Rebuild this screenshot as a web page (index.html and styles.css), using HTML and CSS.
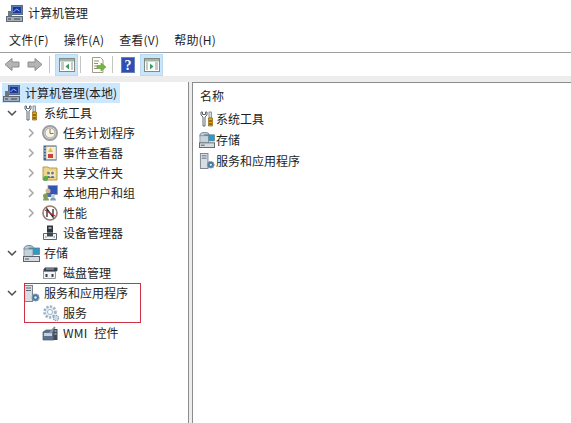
FILE: index.html
```html
<!DOCTYPE html>
<html lang="zh-CN">
<head>
<meta charset="utf-8">
<title>计算机管理</title>
<link rel="stylesheet" href="styles.css">
</head>
<body>
<svg class="defs" width="0" height="0" aria-hidden="true">
  <symbol id="i-computer" viewBox="0 0 17 17">
    <rect x="5.500" y="0.500" width="11" height="9" fill="#5c7fb8" stroke="#5a6a80"/>
    <rect x="7" y="2" width="8" height="6" fill="#1c35a0"/>
    <path d="M7.500 7l3-3 3 2" stroke="#9cc4ee" fill="none"/>
    <path d="M2 6h4v6H2z" fill="#6e7986"/>
    <rect x="0.500" y="11.500" width="16" height="5" fill="#a4acb5" stroke="#5f6a78"/>
    <path d="M2 14h3M8 14h6" stroke="#3d4650"/>
  </symbol>
  <symbol id="i-tools" viewBox="0 0 16 16">
    <path d="M2 1v3l2 2v9h2V6l2-2V1L6.500 1v2.500h-3V1z" fill="#fff" stroke="#5d6670" stroke-width="1"/>
    <rect x="10" y="1" width="2.500" height="6" fill="#d8dde2" stroke="#6a727a" stroke-width="0.700"/>
    <path d="M9.500 7h4v8h-4z" fill="#eaa612" stroke="#8a6208" stroke-width="0.700"/>
    <path d="M10 10h3M10 13h3" stroke="#34302a"/>
  </symbol>
  <symbol id="i-clock" viewBox="0 0 16 16">
    <circle cx="8" cy="8" r="7" fill="#f0ece2" stroke="#9a9ea4" stroke-width="2"/>
    <circle cx="8" cy="8" r="5" fill="#f8f4e6" stroke="#6f7379" stroke-width="0.600"/>
    <path d="M8 4v4.500h3.500" stroke="#96742a" fill="none" stroke-width="1"/>
  </symbol>
  <symbol id="i-log" viewBox="0 0 16 16">
    <rect x="1.500" y="0.500" width="13" height="15" fill="#3e5f8e"/>
    <rect x="4" y="1.500" width="10" height="13" fill="#f4efd8" stroke="#9a9a90" stroke-width="0.500"/>
    <path d="M8.500 2.500l2.500 4.500h-5z" fill="#eebc2c"/>
    <rect x="6" y="9" width="5" height="4" fill="#cf3f3a"/>
    <path d="M2 3h2M2 6h2M2 9h2M2 12h2" stroke="#c8d4e4"/>
  </symbol>
  <symbol id="i-share" viewBox="0 0 16 16">
    <path d="M1 2h5l1 1h8v12H1z" fill="#ecd68c" stroke="#b49b4e"/>
    <path d="M6 6h7v7H6z" fill="#f6eab8"/>
    <circle cx="6.500" cy="8" r="1.500" fill="#6d7c8c"/>
    <circle cx="10.500" cy="8" r="1.500" fill="#6d7c8c"/>
    <path d="M4.500 13a2 2 0 014 0zM8.500 13a2 2 0 014 0z" fill="#54708f"/>
    <circle cx="3.500" cy="13.500" r="2.500" fill="#4fae48"/>
  </symbol>
  <symbol id="i-users" viewBox="0 0 16 16">
    <rect x="6" y="0.500" width="9.500" height="9" fill="#3556b0" stroke="#8f9aa8" stroke-width="0.700"/>
    <circle cx="6" cy="6" r="2.500" fill="#d9b48c"/>
    <path d="M2 12c0-3 2-4 4-4s4 1 4 4z" fill="#4a73ad"/>
    <circle cx="3.500" cy="11" r="2.500" fill="#7aa05c"/>
    <path d="M1 15.500c0-2 1-3 3-3s3 1 3 3z" fill="#8b9a5d"/>
    <circle cx="11" cy="11" r="2" fill="#c4cfdb"/>
    <path d="M8 15.500c0-2 1.500-3 3-3s3 1 3 3z" fill="#7f9cbc"/>
  </symbol>
  <symbol id="i-perf" viewBox="0 0 16 16">
    <circle cx="8" cy="8" r="7" fill="#fff" stroke="#9b7a70" stroke-width="1.600"/>
    <path d="M5 12V4l6 8V4" fill="none" stroke="#1e2735" stroke-width="1.300"/>
    <path d="M3 5l10 6" stroke="#c9312c" stroke-width="1.200"/>
  </symbol>
  <symbol id="i-device" viewBox="0 0 16 16">
    <rect x="5" y="0.500" width="6" height="7" fill="#2f353d"/>
    <rect x="6.500" y="2" width="3" height="2" fill="#9aa3ad"/>
    <path d="M1.500 8.500h13v6h-13z" fill="#f4f5f6" stroke="#5d6670"/>
    <path d="M5 7.500h6v4H5z" fill="#3f4750"/>
    <path d="M3 12h1.500M11.500 12H13" stroke="#6a727a"/>
  </symbol>
  <symbol id="i-storage" viewBox="0 0 17 17">
    <ellipse cx="6" cy="3.500" rx="5" ry="3" fill="#bcd0de" stroke="#6f8090"/>
    <rect x="6" y="3" width="10.500" height="6.500" fill="#2f9ac8" stroke="#5d7686" stroke-width="0.700"/>
    <rect x="1" y="4" width="9" height="8" fill="#c6d2da" stroke="#6f8090" stroke-width="0.700"/>
    <rect x="0.500" y="11.500" width="16" height="5" fill="#d6dbe0" stroke="#5d6670"/>
    <path d="M2 14h4" stroke="#4c545d"/>
  </symbol>
  <symbol id="i-disk" viewBox="0 0 16 16">
    <path d="M3 2.500h12.500v3l-1 1H1.500v-2z" fill="#39414a"/>
    <path d="M4 4h8" stroke="#aab2ba"/>
    <rect x="1.500" y="6.500" width="12" height="7" fill="#f2f3f4" stroke="#6a727a" stroke-width="0.700"/>
    <path d="M3.500 9h2v3h-2zM9.500 9h2v3h-2z" fill="#3a424b"/>
  </symbol>
  <symbol id="i-server" viewBox="0 0 17 17">
    <rect x="1.500" y="0.500" width="8" height="16" fill="#d8dde2" stroke="#7a8490"/>
    <path d="M3 3h5M3 5.500h5" stroke="#5f6a76"/>
    <circle cx="12.500" cy="12.500" r="3.500" fill="#4a789f" stroke="#7d9ab3" stroke-width="1.200" stroke-dasharray="1.500 0.800"/>
    <circle cx="12.500" cy="12.500" r="1.200" fill="#e8eef4"/>
  </symbol>
  <symbol id="i-gear" viewBox="0 0 18 18">
    <circle cx="8" cy="8" r="5.500" fill="#e8f0f6" stroke="#9fb4c8" stroke-width="2.600" stroke-dasharray="2.200 1.400"/>
    <circle cx="8" cy="8" r="2.500" fill="#fff" stroke="#9fb4c8"/>
    <circle cx="14" cy="14" r="2.600" fill="#d0dce6" stroke="#8aa0b4" stroke-width="1.200" stroke-dasharray="1.200 0.800"/>
  </symbol>
  <symbol id="i-wmi" viewBox="0 0 16 16">
    <path d="M1 7l3-2h8v10H1z" fill="#5b7390" stroke="#48566a" stroke-width="0.700"/>
    <rect x="2" y="8" width="8" height="3" fill="#c5d2de"/>
    <path d="M8 8l5-6" stroke="#8d98a4" stroke-width="2"/>
    <rect x="11.500" y="4" width="4" height="11" fill="#3f4a56"/>
    <path d="M12.500 6h2M12.500 9h2" stroke="#d2d8de"/>
  </symbol>
  <symbol id="i-chev-r" viewBox="0 0 10 10"><path d="M3 1l4 4-4 4" fill="none" stroke="#a6a6a6" stroke-width="1.500"/></symbol>
  <symbol id="i-chev-d" viewBox="0 0 10 10"><path d="M1 3l4 4 4-4" fill="none" stroke="#4d4d4d" stroke-width="1.500"/></symbol>
</svg>

<div class="window">
  <header class="titlebar">
    <svg class="ico ico-lg"><use href="#i-computer"/></svg>
    <span class="title">计算机管理</span>
  </header>
  <nav class="menubar">
    <span class="menu">文件(F)</span>
    <span class="menu">操作(A)</span>
    <span class="menu">查看(V)</span>
    <span class="menu">帮助(H)</span>
  </nav>
  <div class="toolbar">
    <svg class="tool-arrow" viewBox="0 0 16 14"><path d="M1 7l7-6v3.500h7v5H8V13z" fill="#b4b4b4" stroke="#8c8c8c"/></svg>
    <svg class="tool-arrow" viewBox="0 0 16 14"><path d="M15 7L8 1v3.500H1v5h7V13z" fill="#b4b4b4" stroke="#8c8c8c"/></svg>
    <span class="tool-sep"></span>
    <span class="tool-btn active">
      <svg class="tool-ico" viewBox="0 0 16 16"><rect x="0.500" y="1.500" width="15" height="13" fill="#fff" stroke="#7f8a80"/><path d="M1 2h14v2.500H1z" fill="#9fb6a6"/><path d="M2 6h3M2 8h3M2 10h3M2 12h3M12 6h2M12 8h2M12 10h2M12 12h2" stroke="#8a9490"/><path d="M10 6.500v6L6.500 9.500z" fill="#3d9a5a"/></svg>
    </span>
    <span class="tool-sep"></span>
    <span class="tool-btn">
      <svg class="tool-ico" viewBox="0 0 16 16"><path d="M2.500 0.500h8l2.500 2.500v12.500H2.500z" fill="#fffdf4" stroke="#a09a88"/><path d="M4 4h5M4 6.500h4M4 9h3M4 11.500h3" stroke="#8f8f8f"/><path d="M7 8.500h4V6l5 4-5 4v-2.500H7z" fill="#72b83a" stroke="#4f8f26" stroke-width="0.500"/></svg>
    </span>
    <span class="tool-sep tight"></span>
    <span class="tool-btn">
      <svg class="tool-ico" viewBox="0 0 16 16"><rect x="1.500" y="0.500" width="13" height="15" fill="#2f4fb4" stroke="#6e7fb8"/><text x="8" y="13" class="q">?</text></svg>
    </span>
    <span class="tool-btn active after-help">
      <svg class="tool-ico" viewBox="0 0 16 16"><rect x="0.500" y="1.500" width="15" height="13" fill="#fff" stroke="#7f8a80"/><path d="M1 2h14v2.500H1z" fill="#9fb6a6"/><path d="M11 6h3M11 8h3M11 10h3M11 12h3M2 6h2M2 8h2M2 10h2M2 12h2" stroke="#8a9490"/><path d="M6 6.500v6l3.500-3z" fill="#3d9a5a"/></svg>
    </span>
  </div>

  <main class="panes">
    <section class="tree">
      <div class="row root"><span class="selected"><svg class="ico ico-lg"><use href="#i-computer"/></svg><span class="root-label">计算机管理(本地)</span></span></div>
      <div class="row lv1"><svg class="chev"><use href="#i-chev-d"/></svg><svg class="ico"><use href="#i-tools"/></svg><span class="label">系统工具</span></div>
      <div class="row lv2"><svg class="chev"><use href="#i-chev-r"/></svg><svg class="ico"><use href="#i-clock"/></svg><span class="label">任务计划程序</span></div>
      <div class="row lv2"><svg class="chev"><use href="#i-chev-r"/></svg><svg class="ico"><use href="#i-log"/></svg><span class="label">事件查看器</span></div>
      <div class="row lv2"><svg class="chev"><use href="#i-chev-r"/></svg><svg class="ico"><use href="#i-share"/></svg><span class="label">共享文件夹</span></div>
      <div class="row lv2"><svg class="chev"><use href="#i-chev-r"/></svg><svg class="ico"><use href="#i-users"/></svg><span class="label">本地用户和组</span></div>
      <div class="row lv2"><svg class="chev"><use href="#i-chev-r"/></svg><svg class="ico"><use href="#i-perf"/></svg><span class="label">性能</span></div>
      <div class="row lv2"><span class="chev"></span><svg class="ico"><use href="#i-device"/></svg><span class="label">设备管理器</span></div>
      <div class="row lv1"><svg class="chev"><use href="#i-chev-d"/></svg><svg class="ico ico-lg"><use href="#i-storage"/></svg><span class="label tight-label">存储</span></div>
      <div class="row lv2"><span class="chev"></span><svg class="ico"><use href="#i-disk"/></svg><span class="label">磁盘管理</span></div>
      <div class="row lv1"><svg class="chev"><use href="#i-chev-d"/></svg><svg class="ico ico-lg"><use href="#i-server"/></svg><span class="label tight-label">服务和应用程序</span></div>
      <div class="row lv2"><span class="chev"></span><svg class="ico ico-xl"><use href="#i-gear"/></svg><span class="label tighter-label">服务</span></div>
      <div class="row lv2"><span class="chev"></span><svg class="ico"><use href="#i-wmi"/></svg><span class="label wide-word">WMI 控件</span></div>
      <div class="highlight"></div>
    </section>
    <section class="list">
      <div class="list-head">名称</div>
      <div class="list-row"><svg class="ico"><use href="#i-tools"/></svg><span class="list-label">系统工具</span></div>
      <div class="list-row"><svg class="ico"><use href="#i-storage"/></svg><span class="list-label">存储</span></div>
      <div class="list-row"><svg class="ico"><use href="#i-server"/></svg><span class="list-label">服务和应用程序</span></div>
    </section>
  </main>
</div>
</body>
</html>
```

FILE: styles.css
```css
* { box-sizing: border-box; }

html, body {
  margin: 0;
  height: 100%;
  overflow: hidden;
  background: #fff;
}

body {
  font-family: "Noto Sans CJK SC", "Liberation Sans", sans-serif;
  font-size: 12px;
  color: #1e1e1e;
}

.defs { position: absolute; }

.window {
  display: flex;
  flex-direction: column;
  height: 423px;
}

.ico {
  width: 16px;
  height: 16px;
  flex: none;
}

.ico-lg { width: 17px; height: 17px; }
.ico-xl { width: 18px; height: 18px; }

.titlebar {
  height: 27px;
  display: flex;
  align-items: center;
  gap: 5px;
  padding-left: 6px;
}

.title { padding-bottom: 2px; }

.menubar {
  height: 26px;
  display: flex;
  align-items: center;
  gap: 15px;
  padding-left: 9px;
  border-bottom: 1px solid #a0a0a0;
  letter-spacing: 0.2px;
}

.toolbar {
  height: 23px;
  display: flex;
  align-items: center;
  padding-left: 4px;
}

.tool-arrow {
  width: 16px;
  height: 15px;
  margin-right: 7px;
}

.tool-arrow + .tool-arrow { margin-right: 4px; }

.tool-sep {
  width: 1px;
  height: 17px;
  background: #c4c4c4;
  margin: 0 5px 0 2px;
}

.tool-sep.tight { margin: 0 3px; }

.tool-btn {
  width: 23px;
  height: 22px;
  display: flex;
  align-items: center;
  justify-content: center;
}

.tool-btn.active {
  background: #cce4f7;
  border: 1px solid #b8daf4;
}

.tool-btn.after-help { margin-left: 1px; }

.tool-ico {
  width: 16px;
  height: 16px;
}

.q {
  font: bold 14px "Liberation Serif", serif;
  fill: #fff;
  text-anchor: middle;
}

.panes {
  flex: 1;
  display: flex;
  gap: 3px;
  background: #ededed;
  padding-top: 6px;
  min-height: 0;
}

.tree {
  position: relative;
  width: 189px;
  flex: none;
  background: #fff;
  border-right: 1px solid #8c8c8c;
  padding-top: 1px;
}

.list {
  flex: 1;
  background: #fff;
  border-left: 1px solid #8c8c8c;
  border-top: 1px solid #8c8c8c;
  padding-left: 6px;
}

.row {
  height: 20px;
  display: flex;
  align-items: center;
}

.root { padding-left: 2px; }
.lv1 { padding-left: 7px; }
.lv2 { padding-left: 26px; }

.chev {
  width: 10px;
  height: 10px;
  flex: none;
  margin-right: 6px;
}

.label {
  margin-left: 5px;
  padding-bottom: 1px;
}

.tight-label { margin-left: 4px; }
.tighter-label { margin-left: 3px; }
.wide-word { word-spacing: 4px; letter-spacing: 0.2px; }

.selected {
  display: flex;
  align-items: center;
  gap: 5px;
  height: 20px;
  background: #cce8ff;
  padding: 0 3px 0 1px;
}

.root-label { padding-bottom: 1px; }

.highlight {
  position: absolute;
  left: 24px;
  top: 201px;
  width: 117px;
  height: 40px;
  border: 1px solid #cc3344;
  pointer-events: none;
}

.list-head {
  height: 25px;
  display: flex;
  align-items: center;
  padding-left: 1px;
}

.list-row {
  height: 21px;
  display: flex;
  align-items: center;
  gap: 1px;
}

.list-label { padding-bottom: 1px; }
```
